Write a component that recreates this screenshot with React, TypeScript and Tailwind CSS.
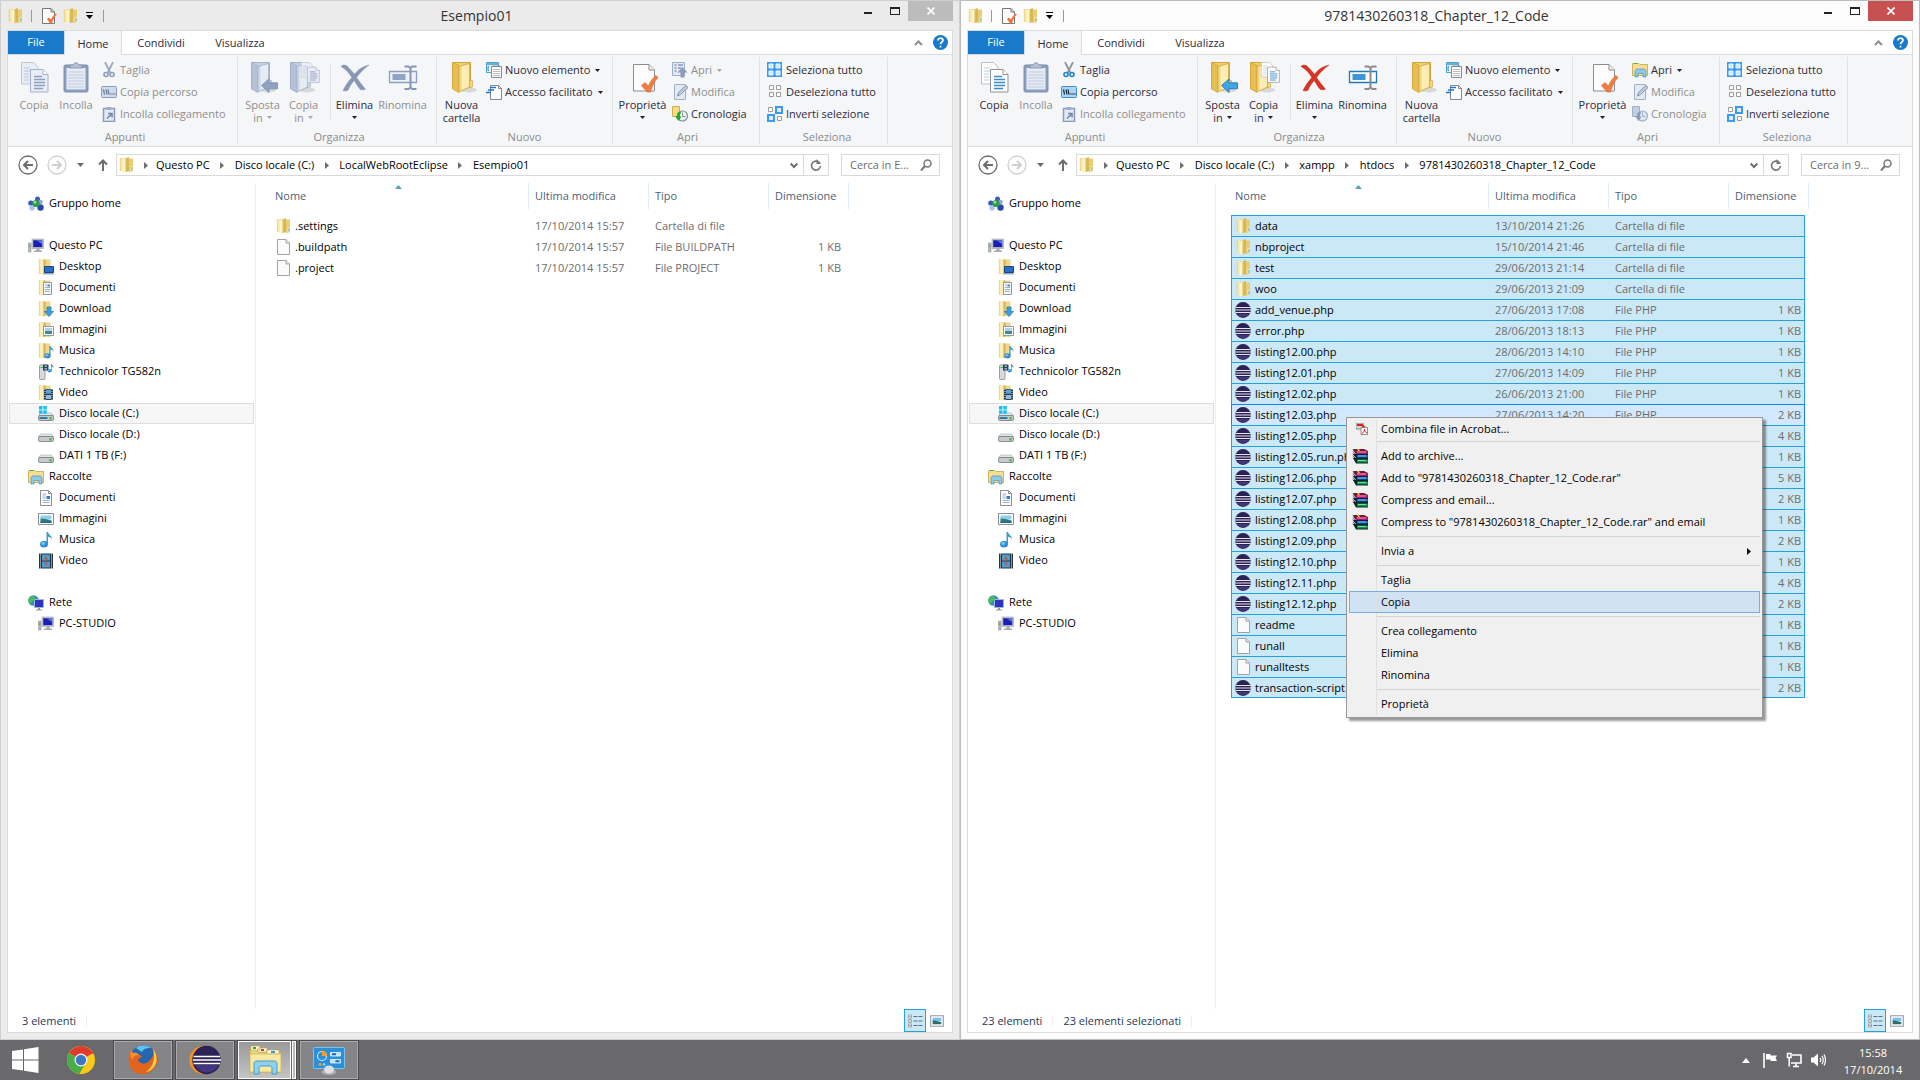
import React from "react";

type FileKind = "folder" | "blank" | "eclipse";

interface FileEntry {
  name: string;
  date: string;
  type: string;
  size?: string;
  kind: FileKind;
}

interface ExplorerProps {
  title: string;
  path: string[];
  search: string;
  files: FileEntry[];
  active?: boolean;
  status: string[];
}

const dir = (name: string, date: string): FileEntry => ({ name, date, type: "Cartella di file", kind: "folder" });
const php = (name: string, date: string, size: string): FileEntry => ({ name, date, size, type: "File PHP", kind: "eclipse" });

const LEFT_FILES: FileEntry[] = [
  dir(".settings", "17/10/2014 15:57"),
  { name: ".buildpath", date: "17/10/2014 15:57", type: "File BUILDPATH", size: "1 KB", kind: "blank" },
  { name: ".project", date: "17/10/2014 15:57", type: "File PROJECT", size: "1 KB", kind: "blank" },
];

const RIGHT_FILES: FileEntry[] = [
  dir("data", "13/10/2014 21:26"),
  dir("nbproject", "15/10/2014 21:46"),
  dir("test", "29/06/2013 21:14"),
  dir("woo", "29/06/2013 21:09"),
  php("add_venue.php", "27/06/2013 17:08", "1 KB"),
  php("error.php", "28/06/2013 18:13", "1 KB"),
  php("listing12.00.php", "28/06/2013 14:10", "1 KB"),
  php("listing12.01.php", "27/06/2013 14:09", "1 KB"),
  php("listing12.02.php", "26/06/2013 21:00", "1 KB"),
  php("listing12.03.php", "27/06/2013 14:20", "2 KB"),
  php("listing12.05.php", "", "4 KB"),
  php("listing12.05.run.php", "", "1 KB"),
  php("listing12.06.php", "", "5 KB"),
  php("listing12.07.php", "", "2 KB"),
  php("listing12.08.php", "", "1 KB"),
  php("listing12.09.php", "", "2 KB"),
  php("listing12.10.php", "", "1 KB"),
  php("listing12.11.php", "", "4 KB"),
  php("listing12.12.php", "", "2 KB"),
  { name: "readme", date: "", type: "", size: "1 KB", kind: "blank" },
  { name: "runall", date: "", type: "", size: "1 KB", kind: "blank" },
  { name: "runalltests", date: "", type: "", size: "1 KB", kind: "blank" },
  php("transaction-script.php", "", "2 KB"),
];

const FOCUSED_FILE = "listing12.03.php";

/* ---------- icons ---------- */

function Svg({ size = 16, box = size, children }: { size?: number; box?: number; children: React.ReactNode }) {
  return (
    <svg width={size} height={size} viewBox={`0 0 ${box} ${box}`} fill="none" className="shrink-0" aria-hidden="true">
      {children}
    </svg>
  );
}

function FolderShape() {
  return (
    <>
      <path d="M1 1h9v13H1z" fill="#f0d987" />
      <path d="M1 1h3v13.500L1 14z" fill="#f8ebae" />
      <path d="M9.500 1.500H14V14l-1.500 1h-3z" fill="#e9cd70" />
      <path d="M4 2.500L8 .5v13.500L4 15.500z" fill="#fdf5cc" />
      <path d="M6.500 1.200L9.500 .3v13.700l-3 1.200z" fill="#ddbe5c" />
      <path d="M8.700 .6l.8-.3v13.700l-.8.3z" fill="#c9a545" />
      <path d="M11.500 9H14v5l-1.500 1h-1z" fill="#f8e9a6" />
      <path d="M13 10v3.500" stroke="#58a9dc" />
      <path d="M1.300 1v13" stroke="#dcc36a" strokeWidth=".6" />
    </>
  );
}

function FolderIcon() {
  return <Svg><FolderShape /></Svg>;
}

function HalfFolder() {
  return (
    <>
      <path d="M1 .5h11.500v14.500H1z" fill="#edd589" />
      <path d="M1 .5h4.500v15L1 14.500z" fill="#fbeeb8" />
      <path d="M5.500.5h2v13.500l-2 1.500z" fill="#d3b35c" />
      <path d="M1.300.5v14" stroke="#dcc36a" strokeWidth=".6" />
    </>
  );
}

function BlankIcon() {
  return (
    <Svg>
      <path d="M1.500.5h8.500l3.500 3.500v11.500h-12z" fill="#fbfbfb" stroke="#a3a3a3" />
      <path d="M10 .5v3.500h3.500" fill="#e6e6e6" stroke="#a3a3a3" />
    </Svg>
  );
}

function EclipseIcon() {
  return (
    <Svg>
      <circle cx="8" cy="8" r="7.900" fill="#2c2255" />
      <path d="M2 12a7.500 7.500 0 0 0 12 0z" fill="#43387a" />
      <path d="M.5 5.500h15M0 8h16M.5 10.500h15" stroke="#e6e4f0" />
    </Svg>
  );
}

function PcShape() {
  return (
    <>
      <path d="M.5 5h2.500v9H.5z" fill="#b9bcbf" stroke="#8d9195" strokeWidth=".6" />
      <path d="M1 7h1.300v2H1z" fill="#4dbb3a" />
      <path d="M4 1h11.500v9.500H4z" fill="#c9ccd2" stroke="#999fa8" strokeWidth=".6" />
      <path d="M5.200 2.200h9.100v7H5.200z" fill="#1a1fb4" />
      <path d="M8.500 2.200h5.800v4z" fill="#5b74e6" />
      <path d="M8.500 10.500h3v2h2.500v1.500H6v-1.500h2.500z" fill="#a4a8ad" />
    </>
  );
}

function NoteShape() {
  return (
    <>
      <path d="M8 0h1.500c.5 3 4.500 3.500 4 8-.3-1.700-1.500-2.900-4-3.200v7H8z" fill="#3a9bd6" />
      <ellipse cx="5.500" cy="12.300" rx="4" ry="3.200" fill="#2f92d0" />
      <ellipse cx="4.700" cy="11.500" rx="1.800" ry="1.200" fill="#86c8ee" />
    </>
  );
}

function DriveShape() {
  return (
    <>
      <path d="M2.500 7h11l2 3H.5z" fill="#e4e6e8" stroke="#a7abae" strokeWidth=".6" />
      <rect x=".5" y="9.500" width="15" height="5" rx="1.300" fill="#c6c9cc" stroke="#72777b" strokeWidth=".8" />
      <path d="M11.500 11h2v2.500h-2z" fill="#3cb52c" />
    </>
  );
}

const NAV_ICONS: Record<string, React.ReactNode> = {
  homegroup: (
    <>
      <circle cx="9.500" cy="3" r="2.500" fill="#3c5fc4" />
      <circle cx="2.800" cy="7" r="2.600" fill="#3457bb" />
      <circle cx="12.500" cy="11.500" r="3.200" fill="#2b47b0" />
      <circle cx="4" cy="12" r="2.700" fill="#a9c4f0" />
      <circle cx="12.500" cy="6" r="2.300" fill="#8aa7e6" />
      <circle cx="8" cy="7.500" r="3.600" fill="#2d9c38" />
      <circle cx="7" cy="6.300" r="1.400" fill="#9fe29a" />
    </>
  ),
  pc: <PcShape />,
  desktop: <><HalfFolder /><path d="M6.500 7.500h9v6h-9z" fill="#2a6fc4" stroke="#17457f" /><path d="M5.500 14h10v1.500h-10z" fill="#94a9c2" /></>,
  documents: <><HalfFolder /><path d="M5.500 2.500h8v12h-8z" fill="#f7f9fb" stroke="#8d98a5" /><path d="M7 5h2M7 7.500h5M7 9.500h5M7 11.500h5" stroke="#8799b0" strokeWidth=".8" /><path d="M9.500 4.500h2.500v2h-2.500z" fill="#3f8ad0" /></>,
  download: <><HalfFolder /><path d="M9 6h4v4.500h2.500L11 15.500 6.500 10.500H9z" fill="#3aa2e4" stroke="#1c74b4" strokeWidth=".7" /></>,
  pictures: <><HalfFolder /><path d="M5.500 4.500h10v9h-10z" fill="#fff" stroke="#8d98a5" /><path d="M7 6h7v3H7z" fill="#a7d3ee" /><path d="M7 9h7v3H7z" fill="#3d8c84" /></>,
  music: <><HalfFolder /><g transform="translate(5 3) scale(.8)"><NoteShape /></g></>,
  media: (
    <>
      <rect x="1.500" y="1" width="5.500" height="14.500" rx="1" fill="#d7d9da" stroke="#85898c" strokeWidth=".8" />
      <path d="M2.500 3.500H5" stroke="#4dbb3a" />
      <path d="M5 .5h5.500v6H5z" fill="#2e4150" />
      <path d="M6.500 1.500h2.500v1.500H6.500zM6.500 4h2.500v1.500H6.500z" fill="#91b9d2" />
      <g transform="translate(8.500 0) scale(.55)"><NoteShape /></g>
    </>
  ),
  video: <><HalfFolder /><path d="M6 4h9v11H6z" fill="#2d3b47" /><path d="M8 4.700h5v4H8z" fill="#5da4d6" /><path d="M8 10h5v4H8z" fill="#8fc0e2" /><path d="M7 4v11M14 4v11" stroke="#e8eef2" strokeWidth=".9" strokeDasharray="1 1" /></>,
  system: <><DriveShape /><path d="M1.500 11h8v2h-8z" fill="#2c7ca8" /><path d="M1 0h3.500v3.500H1zM5.300 0h3.500v3.500H5.300zM1 4.300h3.500v3.400H1zM5.300 4.300h3.500v3.400H5.300z" fill="#12c3f4" /></>,
  drive: <DriveShape />,
  libraries: (
    <>
      <path d="M.5 3V1.500H7l1 1h7.500v11H.5z" fill="#f3de91" stroke="#d2b458" />
      <path d="M2 1.500h3" stroke="#45a84a" />
      <path d="M3 15V9.500C3 8 4 7 5.500 7h6C13 7 14 8 14 9.500V15h-3v-3.500H6V15z" fill="#8bcaea" stroke="#4b94c0" strokeWidth=".7" />
    </>
  ),
  docs: <><path d="M2.500.5h8l3 3v12h-11z" fill="#fdfdfd" stroke="#8a8f94" /><path d="M10.500.5v3h3" stroke="#8a8f94" /><path d="M4.500 4h4M4.500 6h3M4.500 8h3M4.500 10.500h7M4.500 12.500h7" stroke="#8fa4c4" strokeWidth=".9" /><path d="M8.500 6h3.500v3H8.500z" fill="#3479c0" /></>,
  images: <><path d="M.5 2.500h15v11H.5z" fill="#fff" stroke="#8a8f94" /><path d="M2.500 4.500h11v4h-11z" fill="#8ed0ee" /><path d="M2.500 7.500q5 0 11 2v2.500h-11z" fill="#2c8074" /><path d="M2.500 10.500h11v1.500h-11z" fill="#2a62a0" /></>,
  note: <g transform="translate(.5 0)"><NoteShape /></g>,
  film: <><path d="M1 .5h14v15H1z" fill="#2a343c" /><path d="M4 1.500h8v6H4z" fill="#4c9bd4" /><path d="M4 8.500h8v6H4z" fill="#4c9bd4" /><path d="M7 3l3 2.500-2 2H6zM6 9l4 1-2 3z" fill="#b06a48" /><path d="M2.500 .5v15M13.500 .5v15" stroke="#e8eef2" strokeDasharray="1 1" /></>,
  network: <><circle cx="5.500" cy="5.500" r="5.300" fill="#2c8fd2" /><path d="M2 2.500c2-2 4-1.800 5-.5S4 6 3 8.500 1.500 7 .5 6 1 3.500 2 2.500z" fill="#4cbb55" /><path d="M6.500 4.500h9v8h-9z" fill="#2b35c2" stroke="#a9b4d4" /><path d="M10 13h2v1.500h2v1h-6v-1h2z" fill="#9198a5" /></>,
};

type LargeName = "copy" | "paste" | "moveTo" | "copyTo" | "delete" | "rename" | "newFolder" | "properties";

function LargeFolder({ on }: { on: boolean }) {
  const c = on
    ? { back: "#f0cf70", light: "#fcedb4", mid: "#e6bf53", edge: "#d3a53c" }
    : { back: "#c6d1e2", light: "#e6ecf5", mid: "#b4c1d6", edge: "#a3b2ca" };
  return (
    <>
      <ellipse cx="19" cy="28" rx="8" ry="2.500" fill="#000" opacity=".12" />
      <path d="M2.500.5h18v24L10 29l-7.500-3z" fill={c.back} stroke={c.edge} />
      <path d="M2.500.5L9 3.500v27L2.500 27z" fill={c.mid} stroke={c.edge} strokeWidth=".8" />
      <path d="M9 4.500L19.500 1.500v23.500L9 30z" fill={c.light} stroke={c.edge} strokeWidth=".8" />
      <path d="M9 4.500l2.500-.7v25L9 30z" fill={c.mid} opacity=".5" />
      <path d="M19.500 18.500h3V25l-3 1z" fill={on ? "#f4d77d" : "#cdd7e6"} stroke={c.edge} strokeWidth=".7" />
    </>
  );
}

function PagePair({ x, y, s, on }: { x: number; y: number; s: number; on: boolean }) {
  const edge = on ? "#929292" : "#a4b2c9";
  const line = on ? "#3c8ac6" : "#8d9fbd";
  const page = on ? "#fdfdfd" : "#e9eef6";
  return (
    <g transform={`translate(${x} ${y}) scale(${s})`}>
      <path d="M.5.5h12l4.500 4.500v17H.5z" fill={page} stroke={on ? "#bdbdbd" : "#bcc8da"} />
      <path d="M3 6h6M3 9h7M3 12h5M3 15h5M3 18h5" stroke={on ? "#b6cfe2" : "#b9c6d9"} />
      <path d="M9.500 7.500h12.500l5 5V30H9.500z" fill={page} stroke={edge} />
      <path d="M22 7.500v5h5" fill="#fff" stroke={edge} />
      <path d="M13 14.500h8M13 17.500h11M13 20.500h11M13 23.500h11M13 26.500h9" stroke={line} strokeWidth="1.300" />
    </g>
  );
}

function LargeIcon({ name, on }: { name: LargeName; on: boolean }) {
  let art: React.ReactNode = null;
  if (name === "copy") art = <g transform="translate(3 0)"><PagePair x={0} y={0} s={1} on={on} /></g>;
  if (name === "paste")
    art = (
      <>
        <rect x="4" y="3" width="24" height="27" rx="1.500" fill="#8b9dbb" stroke="#7c90b2" />
        <path d="M6.500 6h19v21.500h-19z" fill="#e6ecf5" />
        <path d="M8 10h16M8 13h16M8 16h16M8 19h16M8 22h16M8 25h16" stroke="#bdc9db" />
        <path d="M10 6V3h3.500c0-3 5-3 5 0H22v3z" fill="#b5c2d6" stroke="#7c90b2" strokeWidth=".8" />
      </>
    );
  if (name === "moveTo")
    art = (
      <>
        <g transform="translate(2 0)"><LargeFolder on={on} /></g>
        <path d="M14.500 23.500l7.500-6.500v3.800h8.500v6H22v3.700z" fill={on ? "#3fa5e6" : "#8fa3c2"} stroke={on ? "#1b6fae" : "#788cae"} strokeWidth=".8" />
      </>
    );
  if (name === "copyTo") art = <><LargeFolder on={on} /><PagePair x={13} y={0} s={0.68} on={on} /></>;
  if (name === "delete")
    art = (
      <path
        d="M2 4.500C4 2.500 6.500 2.800 8.500 4.500c3 3 5.200 5.500 7 7.800C19 8 23 4.500 30 3c-5 3.500-9.500 8.500-12.500 12.500 3.200 4.500 6 8 9 11.700-2 .8-4 .8-5.500 0-2.500-3-4-5.800-5.800-8.700-3 3.500-5 6.500-6 9.500-2 1.200-3.700 1.200-5.200.5C6 24 9.500 19.500 12.800 15.500 10.500 11.500 7 7 2 4.500z"
        fill={on ? "#d93324" : "#8798b4"}
        stroke={on ? "#b41e12" : "#7688a6"}
        strokeWidth=".4"
      />
    );
  if (name === "rename")
    art = (
      <>
        <path d="M2.500 9.500h27v11h-27z" fill={on ? "#fff" : "#eef2f8"} stroke={on ? "#1f78b8" : "#8d9fbd"} strokeWidth="1.300" />
        <path d="M5.500 12h13v6h-13z" fill={on ? "#3d95d4" : "#8fa3c2"} />
        <path d="M17.500 4.500h4l2 1.500 2-1.500h4M17.500 27h4l2-1.500 2 1.500h4M23.500 5.500v20.500" stroke={on ? "#8a8a8a" : "#8496b5"} strokeWidth="2" />
      </>
    );
  if (name === "newFolder") art = <g transform="translate(4 0)"><LargeFolder on /></g>;
  if (name === "properties")
    art = (
      <>
        <path d="M6.500 2.500h15.500l5.500 5.500v21h-21z" fill="#fcfcfc" stroke="#8d8d8d" />
        <path d="M22 2.500v5.500h5.500" fill="#eee" stroke="#8d8d8d" />
        <path d="M14.500 23.500l3.500-3 3.500 3.500c1.500-4 4-8 7.500-10.500l2 2c-4 4-6 9-7.500 14.500h-3.500z" fill="#f07c42" stroke="#d4612c" strokeWidth=".6" />
      </>
    );
  return <Svg size={32}>{art}</Svg>;
}

function SmallRibbonIcon({ name, on }: { name: string; on: boolean }) {
  const blue = on ? "#1f83c8" : "#8a9cba";
  const edge = on ? "#8a8f96" : "#9fb0c9";
  switch (name) {
    case "cut":
      return (
        <Svg>
          <path d="M4 0l5.500 11M12 0L6.500 11" stroke={on ? "#8a929b" : "#97a7c0"} strokeWidth="1.700" />
          <circle cx="5" cy="12.500" r="2" stroke={blue} strokeWidth="1.600" />
          <circle cx="11" cy="12.500" r="2" stroke={blue} strokeWidth="1.600" />
        </Svg>
      );
    case "path":
      return (
        <Svg>
          <rect x=".5" y="2.500" width="15" height="11" rx="1" fill={on ? "#a9d5f7" : "#cfdaea"} stroke={on ? "#3f8fd0" : "#8a9cba"} />
          <path d="M2.500 5.500l1 5M5 5.500l1 5M7 5.500l1 5" stroke={on ? "#123" : "#5f7396"} strokeWidth="1.200" />
          <path d="M9.500 10h1M11.500 10h1M13.500 10h1" stroke={on ? "#123" : "#5f7396"} strokeWidth="1.300" />
        </Svg>
      );
    case "shortcut":
      return (
        <Svg>
          <path d="M2.500 2.500h11v13h-11z" fill="#e3e9f3" stroke="#8a9cba" strokeWidth="1.500" />
          <path d="M5.500 1h5v3h-5z" fill="#9db0cb" />
          <path d="M6 12.500l4-4M7 7.500h4v4" stroke="#6f85a9" strokeWidth="1.500" />
        </Svg>
      );
    case "newItem":
      return (
        <Svg>
          <path d="M.5.5h12v10H.5z" fill="#e6f3fb" stroke="#4f9fd0" /><path d="M.5 1h12v2H.5z" fill="#64b0dc" />
          <path d="M3 4.500h-1v4h1" stroke="#3c7fb0" />
          <path d="M5.500 4.500h10v11h-10z" fill="#fff" stroke="#85898e" />
          <path d="M7 7.500h7M7 9.500h7M7 11.500h7M7 13.500h7" stroke="#b5b9be" />
          <path d="M7 3v2M9 3v2M11 3v2M13 3v2" stroke="#85898e" strokeWidth=".8" />
        </Svg>
      );
    case "easyAccess":
      return (
        <Svg>
          <path d="M4.500 1.500h8l3 3v11h-11z" fill="#fff" stroke="#85898e" /><path d="M12.500 1.500v3h3" stroke="#85898e" />
          <path d="M4 3.500h6M2 6h6M0 8.500h5" stroke="#2874c6" strokeWidth="1.300" />
        </Svg>
      );
    case "open":
      return on ? (
        <Svg>{NAV_ICONS.libraries}</Svg>
      ) : (
        <Svg>
          <path d="M.5.5h12v13H.5z" fill="#e3e9f3" stroke="#9fb0c9" /><path d="M2.500 3h2M2.500 6h2M2.500 9h2M6 3h5M6 6h3" stroke="#8a9cba" strokeWidth="1.500" />
          <path d="M10.500 5l5 5.500h-3v5h-4v-5h-3z" fill="#8a9cba" />
        </Svg>
      );
    case "edit":
      return (
        <Svg>
          <path d="M2.500.5h11v15h-11z" fill="#e3e9f3" stroke="#9fb0c9" />
          <path d="M5.500 12l1-3.500L14 1.500l2 2-7.500 7z" fill="#c3cfe1" stroke="#7d90b2" />
        </Svg>
      );
    case "history":
      return (
        <Svg>
          <path d="M.5.5h7v10h-7z" fill={on ? "#f5dc86" : "#c3cfe1"} stroke={on ? "#d0ae4c" : "#9fb0c9"} />
          <circle cx="10.500" cy="10" r="5" fill={on ? "#eef3f7" : "#dfe6f0"} stroke={edge} strokeWidth="1.200" />
          <path d="M10.500 6.500v4h3" stroke={edge} />
          <path d="M8.500 5.500C5.500 6 5 8 5.200 10H3l3.500 5 3-4.500H8C8 9 8 8 9 7z" fill={on ? "#1fa82a" : "#8a9cba"} />
        </Svg>
      );
    case "selectAll":
      return <Svg><path d="M0 0h15v15H0z" fill="#3b9bf0" /><path d="M2 2h4v4H2zM9 2h4v4H9zM2 9h4v4H2zM9 9h4v4H9z" fill="#cfe8ff" stroke="#f2f9ff" /></Svg>;
    case "selectNone":
      return <Svg><path d="M2.500 1.500h4v4h-4zM9.500 1.500h4v4h-4zM2.500 8.500h4v4h-4zM9.500 8.500h4v4h-4z" fill="#fff" stroke="#9a9a9a" /></Svg>;
    default:
      return (
        <Svg>
          <path d="M1.500 1.500h4v4h-4zM10.500 10.500h4v4h-4z" fill="#fff" stroke="#9a9a9a" />
          <path d="M9 1h6v6H9zM1 9h6v6H1z" fill="#d7ecff" stroke="#3b9bf0" strokeWidth="2" />
        </Svg>
      );
  }
}

function RarIcon() {
  return (
    <Svg>
      <path d="M1 1h11l4 2v3H4z" fill="#7a1432" /><path d="M4 3h12v3H4z" fill="#a81a64" /><path d="M5 4h9" stroke="#f0a0cc" />
      <path d="M1 6h15v4H4z" fill="#0a1c48" /><path d="M5 7h11v2.500H5z" fill="#1e66b4" /><path d="M6 8h8" stroke="#7cc0f0" />
      <path d="M1 10h15v5.500H4z" fill="#06281c" /><path d="M5 11.500h11v3H5z" fill="#14925c" /><path d="M6 12.500h8" stroke="#6fe0a4" />
      <path d="M1 1.500L4 5M1 5.500L4 9M1 9.500l3 4M1 3.500l3 3.500M1 7.500l3 4" stroke="#222" strokeWidth=".8" />
      <path d="M5 1h2l1 2H6z" fill="#d9c22c" />
    </Svg>
  );
}

function Caret({ muted = false }: { muted?: boolean }) {
  return (
    <svg width="5" height="3" viewBox="0 0 5 3" className="shrink-0" aria-hidden="true">
      <path d="M0 0h5L2.500 3z" fill={muted ? "#a9a9a9" : "#222"} />
    </svg>
  );
}

/* ---------- ribbon ---------- */

interface BigProps {
  icon: LargeName;
  label: string;
  second?: string;
  caret?: boolean;
  on: boolean;
  iconOn?: boolean;
  width: string;
}

function BigButton({ icon, label, second, caret, on, iconOn = on, width }: BigProps) {
  return (
    <button type="button" className={`flex flex-col items-center pt-[5px] text-[11px] leading-[13px] whitespace-nowrap ${width} ${on ? "text-[#2b2b3a]" : "text-[#8e8e8e]"}`}>
      <LargeIcon name={icon} on={iconOn} />
      <span className="mt-1">{label}</span>
      <span className="flex h-[13px] items-center gap-1">
        {second}
        {caret && <Caret muted={!on} />}
      </span>
    </button>
  );
}

function SmallButton({ icon, label, caret, on = true }: { icon: string; label: string; caret?: boolean; on?: boolean }) {
  return (
    <button type="button" className={`flex h-[22px] items-center gap-[3px] text-[11px] whitespace-nowrap ${on ? "text-[#2b2b3a]" : "text-[#8e8e8e]"}`}>
      <SmallRibbonIcon name={icon} on={on} />
      {label}
      {caret && <span className="ml-0.5"><Caret muted={!on} /></span>}
    </button>
  );
}

function Group({ label, width, children }: { label: string; width: string; children: React.ReactNode }) {
  return (
    <div className={`my-0.5 flex shrink-0 flex-col justify-between border-r border-[#e2e3e4] ${width}`}>
      <div className="flex items-start">{children}</div>
      <div className="text-center text-[11px] leading-[14px] text-[#8b8b8b]">{label}</div>
    </div>
  );
}

function Stack({ children }: { children: React.ReactNode }) {
  return <div className="flex flex-col items-start pt-0.5">{children}</div>;
}

function Ribbon({ active }: { active: boolean }) {
  return (
    <div className="flex h-[92px] overflow-hidden border-b border-[#dadbdc] bg-[#f5f6f7]">
      <Group label="Appunti" width="w-[230px] pl-[5px]">
        <BigButton icon="copy" label="Copia" on={active} width="w-[42px]" />
        <BigButton icon="paste" label="Incolla" on={false} width="w-[42px]" />
        <div className="pl-1">
          <Stack>
            <SmallButton icon="cut" label="Taglia" on={active} />
            <SmallButton icon="path" label="Copia percorso" on={active} />
            <SmallButton icon="shortcut" label="Incolla collegamento" on={false} />
          </Stack>
        </div>
      </Group>
      <Group label="Organizza" width="w-[199px] pl-1">
        <BigButton icon="moveTo" label="Sposta" second="in" caret on={active} width="w-[41px]" />
        <BigButton icon="copyTo" label="Copia" second="in" caret on={active} width="w-[41px]" />
        <div className="mt-[7px] ml-1.5 mr-px h-[55px] w-px bg-[#e2e3e4]" />
        <BigButton icon="delete" label="Elimina" caret on iconOn={active} width="w-[45px]" />
        <BigButton icon="rename" label="Rinomina" on={active} width="w-[51px]" />
      </Group>
      <Group label="Nuovo" width="w-[176px]">
        <BigButton icon="newFolder" label="Nuova" second="cartella" on width="w-[49px]" />
        <Stack>
          <SmallButton icon="newItem" label="Nuovo elemento" caret />
          <SmallButton icon="easyAccess" label="Accesso facilitato" caret />
        </Stack>
      </Group>
      <Group label="Apri" width="w-[147px] pl-[3px]">
        <BigButton icon="properties" label="Proprietà" caret on width="w-[53px]" />
        <div className="pl-[3px]">
          <Stack>
            <SmallButton icon="open" label="Apri" caret on={active} />
            <SmallButton icon="edit" label="Modifica" on={false} />
            <SmallButton icon="history" label="Cronologia" on={!active} />
          </Stack>
        </div>
      </Group>
      <Group label="Seleziona" width="w-[128px] pl-[7px]">
        <Stack>
          <SmallButton icon="selectAll" label="Seleziona tutto" />
          <SmallButton icon="selectNone" label="Deseleziona tutto" />
          <SmallButton icon="invert" label="Inverti selezione" />
        </Stack>
      </Group>
    </div>
  );
}

/* ---------- window parts ---------- */

function TitleBar({ title, active }: { title: string; active: boolean }) {
  return (
    <header className="flex h-[29px] items-start">
      <div className="flex h-[29px] w-[124px] shrink-0 items-center gap-[7px] pl-px">
        <FolderIcon />
        <span className="h-3 w-px bg-[#9a9a9a]" />
        <button type="button" aria-label="Proprietà" className="ml-0.5">
          <Svg>
            <path d="M1.500.5h8.500l3.500 3.500v11.500h-12z" fill="#fdfdfd" stroke="#777" />
            <path d="M10 .5v3.500h3.500" stroke="#777" />
            <path d="M6 11l2-1.500 2 2c1-2.500 3-5 5-6l.8 1C13 9.500 12 12 11 15.500H9z" fill="#f0743c" />
          </Svg>
        </button>
        <button type="button" aria-label="Nuova cartella" className="-ml-px"><FolderIcon /></button>
        <button type="button" aria-label="Personalizza" className="flex flex-col items-center gap-0.5">
          <span className="h-px w-[7px] bg-black" />
          <svg width="7" height="4" viewBox="0 0 7 4" aria-hidden="true"><path d="M0 0h7L3.500 4z" fill="#000" /></svg>
        </button>
        <span className="ml-[3px] h-3 w-px bg-[#9a9a9a]" />
      </div>
      <h1 className="flex-1 truncate text-center text-[14px] leading-[29px] text-[#333]">{title}</h1>
      <div className="flex w-[131px] shrink-0 justify-end">
        <button type="button" aria-label="Riduci a icona" className="flex h-5 w-[27px] items-center justify-center">
          <span className="mt-1 h-[2px] w-2 bg-[#222]" />
        </button>
        <button type="button" aria-label="Ingrandisci" className="flex h-5 w-[27px] items-center justify-center">
          <span className="h-2 w-2.5 border border-t-2 border-[#222]" />
        </button>
        <button type="button" aria-label="Chiudi" className={`flex h-5 w-[45px] items-center justify-center ${active ? "bg-[#c75050]" : "bg-[#bcbcbc]"}`}>
          <svg width="8" height="8" viewBox="0 0 8 8" aria-hidden="true"><path d="M.5.5l7 7M7.500.5l-7 7" stroke="#fff" strokeWidth="1.600" /></svg>
        </button>
      </div>
    </header>
  );
}

function Tabs() {
  return (
    <div className="flex h-6 shrink-0 items-stretch border-b border-[#dadbdc] text-[11px] text-[#2b2b3a]">
      <button type="button" className="w-14 bg-[#1979ca] text-white">File</button>
      <button type="button" className="-mb-px w-[58px] border-x border-[#dadbdc] bg-[#f5f6f7] pt-0.5">Home</button>
      <button type="button" className="w-[78px] pt-0.5">Condividi</button>
      <button type="button" className="w-20 pt-0.5">Visualizza</button>
      <div className="flex-1" />
      <button type="button" aria-label="Riduci barra multifunzione" className="px-2.5">
        <svg width="9" height="6" viewBox="0 0 9 6" fill="none" aria-hidden="true"><path d="M1 5l3.500-3.500L8 5" stroke="#8f8f8f" strokeWidth="2" /></svg>
      </button>
      <button type="button" aria-label="Guida" className="mr-1 self-center">
        <svg width="15" height="15" viewBox="0 0 15 15" fill="none" aria-hidden="true">
          <circle cx="7.500" cy="7.500" r="7.500" fill="#1979ca" />
          <path d="M5 5.500C5 2.500 10 2.500 10 5.300c0 1.700-2.500 1.800-2.500 4M7.500 10.700v1.800" stroke="#fff" strokeWidth="1.700" />
        </svg>
      </button>
    </div>
  );
}

function AddressBar({ path, search }: { path: string[]; search: string }) {
  return (
    <div className="flex h-9 shrink-0 items-center pr-3 pl-[5px]">
      <button type="button" aria-label="Indietro" className="flex w-[29px] justify-center">
        <Svg size={20}><circle cx="10" cy="10" r="9" stroke="#6d6d6d" strokeWidth="1.300" /><path d="M15 10H6M10 6l-4 4 4 4" stroke="#6d6d6d" strokeWidth="2" /></Svg>
      </button>
      <button type="button" aria-label="Avanti" className="flex w-[29px] justify-center">
        <Svg size={20}><circle cx="10" cy="10" r="9" stroke="#cfcfcf" strokeWidth="1.300" /><path d="M5 10h9M10 6l4 4-4 4" stroke="#cfcfcf" strokeWidth="2" /></Svg>
      </button>
      <button type="button" aria-label="Percorsi recenti" className="flex w-[18px] justify-center">
        <svg width="7" height="4" viewBox="0 0 7 4" aria-hidden="true"><path d="M0 0h7L3.500 4z" fill="#6d6d6d" /></svg>
      </button>
      <button type="button" aria-label="Su" className="flex w-[27px] justify-center">
        <Svg size={12}><path d="M6 12V1.500M2 5.500L6 1.500l4 4" stroke="#6d6d6d" strokeWidth="2" /></Svg>
      </button>
      <div className="flex h-[22px] min-w-0 flex-1 items-center border border-[#d9d9d9] pl-0.5">
        <FolderIcon />
        <nav aria-label="Percorso" className="flex min-w-0 flex-1 items-center text-[11px] whitespace-nowrap text-black">
          {path.map((part, i) => (
            <React.Fragment key={part}>
              <span className={`flex justify-center ${i === 0 ? "w-[21px]" : "w-[25px]"}`}>
                <svg width="4" height="7" viewBox="0 0 4 7" aria-hidden="true"><path d="M0 0l4 3.500L0 7z" fill="#6d6d6d" /></svg>
              </span>
              <a href="#">{part}</a>
            </React.Fragment>
          ))}
        </nav>
        <button type="button" aria-label="Posizioni precedenti" className="px-[5px]">
          <svg width="8" height="7" viewBox="0 0 8 7" fill="none" aria-hidden="true"><path d="M.7 1.500L4 5l3.300-3.500" stroke="#6d6d6d" strokeWidth="2" /></svg>
        </button>
        <button type="button" aria-label="Aggiorna" className="flex h-5 w-[25px] items-center justify-center border-l border-[#d9d9d9]">
          <Svg size={12}><path d="M10 4.500A4.500 4.500 0 1 0 10.500 7" stroke="#777" strokeWidth="1.600" /><path d="M6.500 0v5h4.500z" fill="#777" /></Svg>
        </button>
      </div>
      <div className="ml-3 flex h-[22px] w-[99px] items-center border border-[#d9d9d9] pl-2">
        <input type="text" aria-label="Cerca" placeholder={search} className="w-[70px] bg-transparent text-[11px] outline-none placeholder:text-[#6d6d6d]" />
        <Svg size={12}><circle cx="7.500" cy="4.500" r="3.500" stroke="#777" strokeWidth="1.500" /><path d="M5 7L1 11.500" stroke="#777" strokeWidth="2" /></Svg>
      </div>
    </div>
  );
}

const NAV_SECTIONS: { label: string; icon: string; gap?: boolean; children?: [string, string][] }[] = [
  { label: "Gruppo home", icon: "homegroup", gap: true },
  {
    label: "Questo PC",
    icon: "pc",
    children: [
      ["Desktop", "desktop"],
      ["Documenti", "documents"],
      ["Download", "download"],
      ["Immagini", "pictures"],
      ["Musica", "music"],
      ["Technicolor TG582n", "media"],
      ["Video", "video"],
      ["Disco locale (C:)", "system"],
      ["Disco locale (D:)", "drive"],
      ["DATI 1 TB (F:)", "drive"],
    ],
  },
  {
    label: "Raccolte",
    icon: "libraries",
    gap: true,
    children: [
      ["Documenti", "docs"],
      ["Immagini", "images"],
      ["Musica", "note"],
      ["Video", "film"],
    ],
  },
  { label: "Rete", icon: "network", children: [["PC-STUDIO", "pc"]] },
];

function Sidebar() {
  return (
    <nav aria-label="Riquadro di spostamento" className="w-[248px] shrink-0 border-r border-[#f0f0f0] pt-2.5 pr-px pl-px text-[11px] text-black">
      {NAV_SECTIONS.map((s) => (
        <div key={s.label} className={s.gap ? "mb-[21px]" : ""}>
          <a href="#" className="flex h-[21px] items-center gap-[5px] pl-[19px]">
            <Svg>{NAV_ICONS[s.icon]}</Svg>
            {s.label}
          </a>
          {s.children?.map(([label, icon]) => (
            <a
              key={label}
              href="#"
              className={`flex h-[21px] items-center gap-[5px] border pl-[28px] ${icon === "system" ? "border-[#dedede] bg-[#f7f7f7]" : "border-transparent"}`}
            >
              <Svg>{NAV_ICONS[icon]}</Svg>
              {label}
            </a>
          ))}
        </div>
      ))}
    </nav>
  );
}

function FileTable({ files, selected }: { files: FileEntry[]; selected: boolean }) {
  const head = "flex h-[26px] items-center text-left";
  return (
    <table className="w-[574px] table-fixed border-separate border-spacing-0 text-[11px] leading-[16px]">
      <colgroup>
        <col className="w-[257px]" />
        <col className="w-[120px]" />
        <col className="w-[120px]" />
        <col className="w-[77px]" />
      </colgroup>
      <thead>
        <tr className="h-8 align-top text-[#4c607a]">
          <th className="p-0 font-normal">
            <button type="button" className={`${head} relative w-full pl-1`}>
              Nome
              <svg width="7" height="4" viewBox="0 0 7 4" className="absolute top-0.5 left-[124px]" aria-hidden="true"><path d="M0 4h7L3.500 0z" fill="#5b9cc0" /></svg>
            </button>
          </th>
          <th className="p-0 font-normal"><button type="button" className={`${head} w-full border-l border-[#e1ebf5] pl-1.5`}>Ultima modifica</button></th>
          <th className="p-0 font-normal"><button type="button" className={`${head} w-full border-l border-[#e1ebf5] pl-1.5`}>Tipo</button></th>
          <th className="p-0 font-normal"><button type="button" className={`${head} w-[81px] border-x border-[#e1ebf5] pl-1.5`}>Dimensione</button></th>
        </tr>
      </thead>
      <tbody>
        {files.map((f, i) => {
          const focused = selected && f.name === FOCUSED_FILE;
          const edge = !selected
            ? "border-transparent"
            : focused
            ? "border-[#1883d7] bg-[#d1e8ff]"
            : "border-[#26a0da] bg-[#cbe8f6]";
          const cell = `h-[21px] border-t p-0 whitespace-nowrap ${edge} ${selected && i === files.length - 1 ? "border-b" : ""}`;
          return (
            <tr key={f.name}>
              <td className={`${cell} border-l text-black`}>
                <span className={`flex items-center ${f.kind === "eclipse" ? "gap-1 pl-[3px]" : "gap-[3px] pl-1"}`}>
                  {f.kind === "folder" && <FolderIcon />}
                  {f.kind === "blank" && <BlankIcon />}
                  {f.kind === "eclipse" && <EclipseIcon />}
                  {f.name}
                </span>
              </td>
              <td className={`${cell} pl-[7px] text-[#6d6d6d]`}>{f.date}</td>
              <td className={`${cell} pl-[7px] text-[#6d6d6d]`}>{f.type}</td>
              <td className={`${cell} border-r pr-[3px] text-right text-[#6d6d6d]`}>{f.size}</td>
            </tr>
          );
        })}
      </tbody>
    </table>
  );
}

function ExplorerWindow({ title, path, search, files, active = false, status }: ExplorerProps) {
  return (
    <section className={`flex min-w-0 flex-col border px-1.5 pb-1.5 ${active ? "border-[#bdbdbd] bg-[#fcfcfc]" : "border-[#cfcfcf] bg-[#ebebeb]"}`}>
      <TitleBar title={title} active={active} />
      <div className="flex min-h-0 flex-1 flex-col border border-[#dadbdc] bg-white">
        <Tabs />
        <Ribbon active={active} />
        <AddressBar path={path} search={search} />
        <div className="flex flex-1">
          <Sidebar />
          <main className="min-w-0 flex-1 pl-[15px]">
            <FileTable files={files} selected={active} />
          </main>
        </div>
        <footer className="flex h-[23px] shrink-0 items-center pr-2 pl-[14px] text-[11px] text-[#1e395b]">
          {status.map((s) => (
            <span key={s} className="mr-2.5 border-r border-[#f0f0f0] pr-2.5 leading-[12px]">{s}</span>
          ))}
          <div className="flex-1" />
          <button type="button" aria-label="Dettagli" className="flex h-[23px] w-[22px] items-center justify-center border border-[#26a0da] bg-[#cbe8f6]">
            <Svg>
              <path d="M1.500 2h3v3h-3zM1.500 6.500h3v3h-3zM1.500 11h3v3h-3z" fill="#fff" stroke="#8a97a5" strokeWidth=".8" />
              <path d="M2.500 8h1" stroke="#d02020" /><path d="M2.500 12.500h1" stroke="#2a52c0" /><path d="M2.500 3.500h1" stroke="#3a8a3a" />
              <path d="M6.500 3.500h4M11.500 3.500h4M6.500 8h4M11.500 8h4M6.500 12.500h4M11.500 12.500h4" stroke="#5d6d7c" />
            </Svg>
          </button>
          <button type="button" aria-label="Anteprime grandi" className="ml-1 flex">
            <Svg size={14} box={16}>
              <path d="M.8 2h14.400v12H.8z" fill="#fff" stroke="#8a97a5" strokeWidth="1.200" />
              <path d="M3 4.200h10v4H3z" fill="#79c0ea" /><path d="M3 7l5 1 5 1.500v2.300H3z" fill="#2d7064" />
            </Svg>
          </button>
        </footer>
      </div>
    </section>
  );
}

/* ---------- context menu ---------- */

type MenuRow = { label: string; rar?: boolean; sub?: boolean; hot?: boolean } | null;

const MENU: MenuRow[] = [
  null,
  { label: "Add to archive...", rar: true },
  { label: 'Add to "9781430260318_Chapter_12_Code.rar"', rar: true },
  { label: "Compress and email...", rar: true },
  { label: 'Compress to "9781430260318_Chapter_12_Code.rar" and email', rar: true },
  null,
  { label: "Invia a", sub: true },
  null,
  { label: "Taglia" },
  { label: "Copia", hot: true },
  null,
  { label: "Crea collegamento" },
  { label: "Elimina" },
  { label: "Rinomina" },
  null,
  { label: "Proprietà" },
];

function ContextMenu() {
  return (
    <div role="menu" className="absolute top-[417px] left-[386px] w-[417px] border border-[#979797] bg-[#f0f0f0] p-0.5 text-[11px] text-black shadow-[3px_3px_2px_rgba(0,0,0,0.4)]">
      <button type="button" role="menuitem" className="flex h-[18px] w-full items-center text-left">
        <span className="flex w-[27px] justify-center pr-0.5">
          <Svg size={12}>
            <path d="M0 0h7v6H0z" fill="#d9d9d9" stroke="#777" strokeWidth=".8" /><path d="M1 2h5l3 3" stroke="#d22" strokeWidth="2" />
            <path d="M5 4.500h6.500v7H5z" fill="#fff" stroke="#777" strokeWidth=".8" /><path d="M6 10.500c2-1 2.500-3 2.500-4.500 0 2 1 3.500 3 4" stroke="#d22" />
          </Svg>
        </span>
        <span className="flex h-full items-center border-l border-[#e0e0e0] pl-1">Combina file in Acrobat...</span>
      </button>
      {MENU.map((row, i) =>
        row === null ? (
          <div key={i} role="separator" className="ml-[27px] flex h-[7px] items-center border-l border-[#e0e0e0]">
            <span className="h-px w-full bg-[#d4d4d4]" />
          </div>
        ) : (
          <button
            key={i}
            type="button"
            role="menuitem"
            className={`flex h-[22px] w-full items-center text-left ${row.hot ? "bg-[#d1e2f2] outline outline-1 -outline-offset-1 outline-[#78aee5]" : ""}`}
          >
            <span className="flex w-[27px] pl-[3px]">{row.rar && <RarIcon />}</span>
            <span className="flex h-full flex-1 items-center border-l border-[#e0e0e0] pl-1">{row.label}</span>
            {row.sub && <svg width="4" height="7" viewBox="0 0 4 7" className="mr-[9px]" aria-hidden="true"><path d="M0 0l4 3.500L0 7z" fill="#111" /></svg>}
          </button>
        )
      )}
    </div>
  );
}

/* ---------- taskbar ---------- */

function TaskButton({ label, current, children }: { label: string; current?: boolean; children: React.ReactNode }) {
  return (
    <button type="button" aria-label={label} className={`flex h-10 w-[60px] border border-[#4d4d4f] ${current ? "" : "bg-[#858587]"}`}>
      <span className={`flex h-full flex-1 items-center justify-center border ${current ? "border-white bg-linear-to-b from-[#9a9a9b] to-[#c4c4c5]" : "border-[#a9a9aa]"}`}>{children}</span>
      {current && <span className="ml-px h-full w-1 border border-white bg-[#bcbcbd]" />}
    </button>
  );
}

function Taskbar() {
  return (
    <footer className="flex h-10 shrink-0 items-center bg-[#69696b] text-white">
      <button type="button" aria-label="Start" className="flex w-[50px] justify-center">
        <Svg size={28}><path d="M1 5l11-1.600V13.500H1zM13 3.200L27.500 1v12.500H13zM1 14.500h11v10L1 23zM13 14.500h14.500V27L13 24.800z" fill="#fff" /></Svg>
      </button>
      <button type="button" aria-label="Google Chrome" className="flex w-[63px] justify-center pr-px">
        <Svg size={28}>
          <circle cx="14" cy="14" r="14" fill="#fcc916" />
          <path d="M14 14L1.900 7A14 14 0 0 1 26.100 7z" fill="#de3b2c" />
          <path d="M1.900 7A14 14 0 0 0 12.500 28L19 18l-5-4z" fill="#4aae48" />
          <path d="M14 7.500h12.500L25 5.500H8z" fill="#de3b2c" />
          <path d="M20 14l-1.500 6L14 28h-1.500L17 20z" fill="#fcc916" />
          <circle cx="14" cy="14" r="6.500" fill="#f4f4f4" /><circle cx="14" cy="14" r="5.200" fill="#3b78c8" />
        </Svg>
      </button>
      <div className="flex gap-0.5">
        <TaskButton label="Firefox">
          <Svg size={30}>
            <circle cx="15.500" cy="14.500" r="14" fill="#2467b0" />
            <path d="M8 3c4-3.500 12-3 15 0-4-.5-8 1-9 4z" fill="#5fc3ee" />
            <path d="M24 3c6 5 7.500 15 2 21-7 8-20 6.500-24-2.500C-.5 15 .5 9 3 5c.5 2 1.500 3 3 3 2-1 4 .5 5 2 1.500 0 3 .5 2.500 2-1 1-3 1.500-3.500 3 1 3 6 5 9.500 2.500C25 14 26.500 8 24 3z" fill="#e2641f" />
            <path d="M25 4c4.500 5 5 13 1 18-2 3-5 4.500-8 5 7-5 10-14 7-23z" fill="#f9cf3c" />
            <path d="M3 5c.5 2 1.500 3 3 3 2-1 4 .5 5 2-3-.5-6 1-7 5-1.500-3-2-7-1-10z" fill="#f3932b" />
          </Svg>
        </TaskButton>
        <TaskButton label="Eclipse">
          <Svg size={32}>
            <circle cx="14.500" cy="16" r="14" fill="#f7941e" /><circle cx="17.500" cy="16" r="14.200" fill="#2c2255" />
            <path d="M6 21h23.500a13 13 0 0 1-23.500 0z" fill="#43367f" />
            <path d="M4.500 12.500h26.500M4 16h28M4.500 19.500h26.500" stroke="#fff" strokeWidth="1.700" />
          </Svg>
        </TaskButton>
        <TaskButton label="Esplora file" current>
          <Svg size={32}>
            <path d="M1 5h10l1 3h20v20H1z" fill="#ecd27a" stroke="#c7a648" strokeWidth=".8" />
            <path d="M2 2h9v4H2zM9 4h9v4H9zM18 6h12v4H18z" fill="#fdf8df" stroke="#c7a648" strokeWidth=".6" />
            <path d="M4 3h3v2H4z" fill="#1fae39" /><path d="M12 5h3v2h-3z" fill="#d8352a" /><path d="M22 7h4v2h-4z" fill="#2c9be0" />
            <path d="M1 10h31v18H1z" fill="#f7e8a4" stroke="#d4b65c" strokeWidth=".8" />
            <path d="M5 30V20c0-2 1-3 3-3h17c2 0 3 1 3 3v10h-5v-6c0-1-1-2-2-2h-9c-1 0-2 1-2 2v6z" fill="#8fd0ee" stroke="#4b9cc8" />
          </Svg>
        </TaskButton>
        <TaskButton label="Pannello di controllo">
          <Svg size={32}>
            <rect x=".5" y="3.500" width="31" height="21" rx="1" fill="#2c8fd8" stroke="#7cc2ee" />
            <circle cx="9" cy="12" r="4.500" stroke="#cfe9fa" strokeWidth="1.200" /><path d="M9 12V6.500A5 5 0 0 1 14 12z" fill="#f7a030" />
            <path d="M17.500 8.500h10v3.500h-10zM17.500 15.500h10V19h-10z" fill="#bfe2f8" stroke="#e6f5fd" strokeWidth=".8" /><path d="M19 9.300h4v2h-4zM22.500 16.300h4v2h-4z" fill="#1b6db4" />
            <circle cx="7" cy="20.500" r="1.400" fill="#f7a030" /><circle cx="11" cy="20.500" r="1.400" fill="#7fd0f0" />
            <ellipse cx="16" cy="28" rx="7.500" ry="3" fill="#a9adb1" /><ellipse cx="16" cy="25.500" rx="5" ry="4" fill="#dfe1e3" />
          </Svg>
        </TaskButton>
      </div>
      <div className="flex-1" />
      <div className="flex items-center gap-2">
        <button type="button" aria-label="Mostra icone nascoste" className="mr-1">
          <svg width="8" height="5" viewBox="0 0 8 5" aria-hidden="true"><path d="M0 5h8L4 0z" fill="#fff" /></svg>
        </button>
        <button type="button" aria-label="Centro operativo">
          <Svg><path d="M2 1v15" stroke="#fff" strokeWidth="1.600" /><path d="M4 2h4.500v1.500H15L13.500 6l1.500 3H8.500V7.500H4z" fill="#fff" /></Svg>
        </button>
        <button type="button" aria-label="Rete">
          <Svg><path d="M6 3h9v8H5M10 11v3M7 14.500h6" stroke="#fff" strokeWidth="1.600" /><path d="M1.500 1.500h3.500v4H1.500zM3.200 5.500v9" stroke="#fff" strokeWidth="1.500" /></Svg>
        </button>
        <button type="button" aria-label="Volume">
          <Svg><path d="M1 5.500h2.500L8 1.500v13L3.500 10.500H1z" fill="#fff" /><path d="M10 6q1.500 2 0 4M12 4q2.500 4 0 8M14 2.500q3 5.500 0 11" stroke="#fff" strokeWidth="1.200" /></Svg>
        </button>
      </div>
      <div className="w-[94px] pt-0.5 text-center text-[11px] leading-[17px]">
        <div>15:58</div>
        <div>17/10/2014</div>
      </div>
    </footer>
  );
}

export default function App() {
  return (
    <div className="flex min-h-screen flex-col font-['Open_Sans','Noto_Sans',sans-serif]">
      <div className="grid flex-1 grid-cols-2">
        <ExplorerWindow
          title="Esempio01"
          path={["Questo PC", "Disco locale (C:)", "LocalWebRootEclipse", "Esempio01"]}
          search="Cerca in E..."
          files={LEFT_FILES}
          status={["3 elementi"]}
        />
        <div className="relative grid min-w-0">
          <ExplorerWindow
            title="9781430260318_Chapter_12_Code"
            path={["Questo PC", "Disco locale (C:)", "xampp", "htdocs", "9781430260318_Chapter_12_Code"]}
            search="Cerca in 9..."
            files={RIGHT_FILES}
            active
            status={["23 elementi", "23 elementi selezionati"]}
          />
          <ContextMenu />
        </div>
      </div>
      <Taskbar />
    </div>
  );
}
